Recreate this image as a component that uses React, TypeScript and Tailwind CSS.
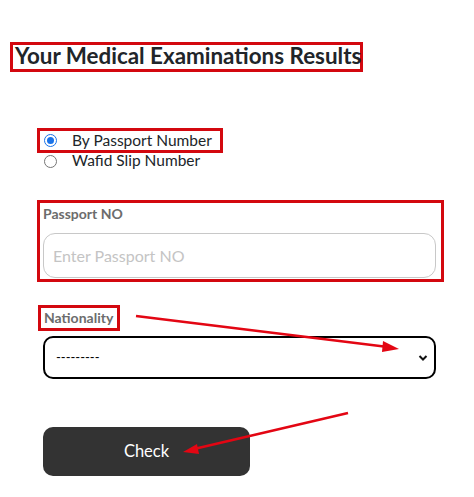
import React from "react";

function Radio({ checked }: { checked?: boolean }) {
  return checked ? (
    <div className="w-[13px] h-[13px] rounded-full border-[1.5px] border-[#1a73e8] flex items-center justify-center bg-white">
      <div className="w-[7px] h-[7px] rounded-full bg-[#1a73e8]" />
    </div>
  ) : (
    <div className="w-[13px] h-[13px] rounded-full border border-[#767676] bg-white" />
  );
}

export default function App() {
  return (
    <div
      className="relative w-[474px] h-[497px] bg-white overflow-hidden"
      style={{ fontFamily: "Lato, 'Open Sans', sans-serif" }}
    >
      <div className="flex flex-col items-start pt-[42px]">
        <div className="ml-[10px] h-[30px] w-[353px] border-[3px] border-[#d3080f] flex items-center pl-[2px] overflow-visible">
          <span className="text-[22.4px] font-bold text-[#212529] leading-none -mt-[1px] whitespace-nowrap">
            Your Medical Examinations Results
          </span>
        </div>

        <div className="mt-[56px] ml-[37px] flex flex-col">
          <div className="w-[186px] h-[25px] border-[3px] border-[#d3080f] flex items-center pl-[4px]">
            <Radio checked />
            <span className="ml-[15px] text-[15.5px] text-[#212529] leading-none whitespace-nowrap">By Passport Number</span>
          </div>
          <div className="h-[18px] flex items-center pl-[7px] -mt-[1px]">
            <Radio />
            <span className="ml-[15px] text-[15.5px] text-[#212529] leading-none whitespace-nowrap">Wafid Slip Number</span>
          </div>
        </div>

        <div className="mt-[30px] ml-[37px] w-[407px] h-[82px] border-[3px] border-[#d3080f] flex flex-col pl-[3px] pt-[3px]">
          <span className="text-[14px] font-bold text-[#6c6c6c] leading-[16px]">Passport NO</span>
          <div className="mt-[11px] w-[393px] h-[45px] rounded-[12px] border border-[#c8c8c8] flex items-center pl-[9px]">
            <span className="text-[16px] text-[#c4c4c4] leading-none">Enter Passport NO</span>
          </div>
        </div>

        <div className="mt-[23px] ml-[38px] w-[82px] h-[26px] border-[3px] border-[#d3080f] flex items-center pl-[3px]">
          <span className="text-[14px] font-bold text-[#6c6c6c] leading-none whitespace-nowrap">Nationality</span>
        </div>

        <div className="mt-[5px] ml-[43px] w-[393px] h-[43px] rounded-[10px] border-2 border-black flex items-center justify-between pl-[11px] pr-[6px]">
          <span className="text-[13px] text-black leading-none">---------</span>
          <svg width="10" height="8" viewBox="0 0 10 8">
            <path d="M1.5 2 L5 5.5 L8.5 2" stroke="#111" strokeWidth="2" fill="none" />
          </svg>
        </div>

        <div className="mt-[48px] ml-[43px] w-[207px] h-[49px] rounded-[10px] bg-[#333333] flex items-center justify-center">
          <span className="text-[16.5px] text-white leading-none">Check</span>
        </div>
      </div>

      <svg className="absolute inset-0 pointer-events-none" width="474" height="497" viewBox="0 0 474 497">
        <line x1="136" y1="316" x2="388" y2="347" stroke="#e30613" strokeWidth="2.5" />
        <polygon points="399,349 383,341 382,352" fill="#e30613" />
        <line x1="348" y1="413" x2="194" y2="449" stroke="#e30613" strokeWidth="2.5" />
        <polygon points="183,452 197,444 199,454" fill="#e30613" />
      </svg>
    </div>
  );
}
